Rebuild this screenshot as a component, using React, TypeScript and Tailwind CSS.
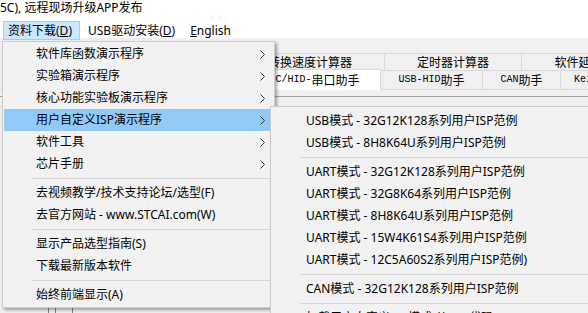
import React from 'react';

type Item = { t: React.ReactNode; arrow?: boolean; active?: boolean } | 'sep';

const mainItems: Item[] = [
  { t: '软件库函数演示程序', arrow: true },
  { t: '实验箱演示程序', arrow: true },
  { t: '核心功能实验板演示程序', arrow: true },
  { t: '用户自定义ISP演示程序', arrow: true, active: true },
  { t: '软件工具', arrow: true },
  { t: '芯片手册', arrow: true },
  'sep',
  { t: '去视频教学/技术支持论坛/选型(F)' },
  { t: '去官方网站 - www.STCAI.com(W)' },
  'sep',
  { t: '显示产品选型指南(S)' },
  { t: '下载最新版本软件' },
  'sep',
  { t: '始终前端显示(A)' },
];

const subItems: Item[] = [
  { t: 'USB模式 - 32G12K128系列用户ISP范例' },
  { t: 'USB模式 - 8H8K64U系列用户ISP范例' },
  'sep',
  { t: 'UART模式 - 32G12K128系列用户ISP范例' },
  { t: 'UART模式 - 32G8K64系列用户ISP范例' },
  { t: 'UART模式 - 8H8K64U系列用户ISP范例' },
  { t: 'UART模式 - 15W4K61S4系列用户ISP范例' },
  { t: 'UART模式 - 12C5A60S2系列用户ISP范例)' },
  'sep',
  { t: 'CAN模式 - 32G12K128系列用户ISP范例' },
  'sep',
  { t: '加载用户自定义ISP模式(从)ISP代码' },
];

const Chevron = () => (
  <svg
    width="5"
    height="9"
    viewBox="0 0 5 9"
    className="absolute right-[8px] top-[7px]"
  >
    <path d="M0.5 0.5 L4.5 4.5 L0.5 8.5" fill="none" stroke="#333333" strokeWidth="1" />
  </svg>
);

const MenuList = ({ items, pl, sepPl }: { items: Item[]; pl: string; sepPl: string }) => (
  <>
    {items.map((it, i) =>
      it === 'sep' ? (
        <div key={i} className={`h-[7px] flex items-center pr-[4px] ${sepPl}`}>
          <div className="h-px w-full bg-[#d7d7d7]" />
        </div>
      ) : (
        <div
          key={i}
          className={`relative h-[22px] mx-[1px] flex items-center whitespace-nowrap text-[12px] text-black ${pl} ${
            it.active ? 'bg-[#91c9f7]' : ''
          }`}
        >
          {it.t}
          {it.arrow && <Chevron />}
        </div>
      )
    )}
  </>
);

const Mono = ({ children }: { children: React.ReactNode }) => (
  <span className="font-[family-name:'Liberation_Mono',monospace] text-[10px]">{children}</span>
);

export default function App() {
  return (
    <div className="relative w-[588px] h-[313px] overflow-hidden bg-[#f0f0f0] font-[family-name:'Noto_Sans','Noto_Sans_CJK_SC',sans-serif] text-black">
      {/* title line */}
      <div className="h-[20px] bg-white text-[12px] leading-[16px] whitespace-nowrap">
        5C), 远程现场升级APP发布
      </div>
      {/* menu bar */}
      <div className="relative z-[5] h-[18px] bg-white flex items-start text-[12px] whitespace-nowrap">
        <div className="ml-[3px] mt-[1px] h-[19px] w-[77px] border border-[#99d1ff] bg-[#cce8ff] flex items-center pl-[4px]">
          资料下载(<span className="underline">D</span>)
        </div>
        <div className="ml-[8px] mt-[1px] h-[19px] flex items-center">
          USB驱动安装(<span className="underline">D</span>)
        </div>
        <div className="ml-[15px] mt-[1px] h-[19px] flex items-center">
          <span className="underline">E</span>nglish
        </div>
      </div>

      {/* tabs */}
      <div className="pt-[15px] font-[family-name:'Noto_Sans_CJK_SC',sans-serif] text-[12px] whitespace-nowrap">
        <div className="flex pl-[175px] h-[17px]">
          <div className="w-[210px] shrink-0 border-t border-l border-r border-[#d9d9d9] flex items-center justify-center leading-none">
            串口波特率转换速度计算器
          </div>
          <div className="w-[137px] shrink-0 border-t border-r border-[#d9d9d9] flex items-center justify-center leading-none">
            定时器计算器
          </div>
          <div className="w-[150px] shrink-0 border-t border-r border-[#d9d9d9] flex items-center justify-center leading-none">
            软件延时计算器
          </div>
        </div>
        <div className="flex pl-[218px] h-[20px] border-b border-[#d9d9d9]">
          <div className="relative z-[1] -mt-[1px] h-[21px] w-[162px] shrink-0 bg-white border-t border-l border-[#d9d9d9] flex items-center justify-center leading-none">
            <Mono>USB-CDC/HID-</Mono>串口助手
          </div>
          <div className="w-[102px] shrink-0 border-t border-l border-[#d9d9d9] flex items-center justify-center leading-none">
            <Mono>USB-HID</Mono>助手
          </div>
          <div className="w-[78px] shrink-0 border-t border-l border-[#d9d9d9] flex items-center justify-center leading-none">
            <Mono>CAN</Mono>助手
          </div>
          <div className="w-[100px] shrink-0 border-t border-l border-r border-[#d9d9d9] flex items-center justify-center leading-none">
            <Mono>Keil</Mono>仿真设置
          </div>
        </div>
        <div className="mt-[6px] h-px bg-[#a0a0a0]" />
        <div className="h-[9px]" />
        <div className="h-px bg-[#d9d9d9]" />
        <div className="flex h-[220px] pl-[48px] gap-[6px] pt-[200px]">
          <div className="w-px h-full bg-[#808080]" />
          <div className="w-px h-full bg-[#808080]" />
          <div className="ml-[10px] w-px h-full bg-[#808080]" />
        </div>
      </div>

      {/* main dropdown */}
      <div className="absolute z-10 left-[2px] top-[41px] w-[273px] h-[267px] bg-[#f2f2f2] border border-[#cccccc] shadow-[2px_2px_3px_rgba(0,0,0,0.35)] pt-[1px]">
        <MenuList items={mainItems} pl="pl-[32px]" sepPl="pl-[29px]" />
      </div>

      {/* submenu */}
      <div className="absolute z-20 left-[270px] top-[106px] w-[340px] h-[240px] bg-[#f2f2f2] border border-[#cccccc] shadow-[2px_2px_3px_rgba(0,0,0,0.35)] pt-[3px]">
        <MenuList items={subItems} pl="pl-[34px]" sepPl="pl-[29px]" />
      </div>
    </div>
  );
}
